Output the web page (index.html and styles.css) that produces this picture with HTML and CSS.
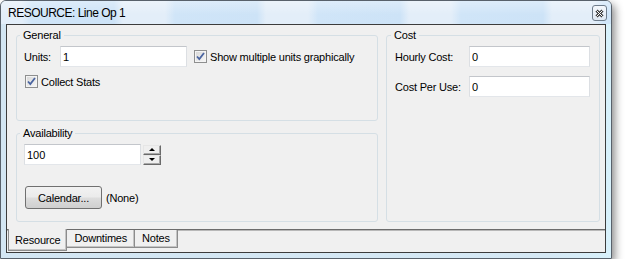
FILE: index.html
```html
<!doctype html>
<html lang="en">
<head>
    <meta charset="UTF-8">
    <title>RESOURCE: Line Op 1</title>
    <link rel="stylesheet" href="styles.css">
</head>
<body>
    <div class="window">
        <div class="titlebar">
            <span class="title">RESOURCE: Line Op 1</span>
            <button class="close">
                <svg width="9" height="9" viewBox="0 0 9 9">
                    <path d="M1.5 1.5 L7.5 7.5 M7.5 1.5 L1.5 7.5" stroke="#3b3b3b" stroke-width="3"/>
                    <path d="M1.5 1.5 L7.5 7.5 M7.5 1.5 L1.5 7.5" stroke="#ffffff" stroke-width="1"/>
                </svg>
            </button>
        </div>

        <div class="client">
            <div class="page">
                <fieldset class="group general">
                    <legend>General</legend>
                    <div class="row">
                        <label class="lbl units-lbl">Units:</label>
                        <input type="text" class="field units" value="1">
                        <label class="check show-check">
                            <span class="box"><svg width="11" height="11" viewBox="0 0 11 11"><path d="M2 5.5 L4.3 8 L9 2" fill="none" stroke="#4a64a0" stroke-width="1.8"/></svg></span>
                            Show multiple units graphically
                        </label>
                    </div>
                    <label class="check stats-check">
                        <span class="box"><svg width="11" height="11" viewBox="0 0 11 11"><path d="M2 5.5 L4.3 8 L9 2" fill="none" stroke="#4a64a0" stroke-width="1.8"/></svg></span>
                        Collect Stats
                    </label>
                </fieldset>

                <fieldset class="group cost">
                    <legend>Cost</legend>
                    <div class="row">
                        <label class="lbl cost-lbl">Hourly Cost:</label>
                        <input type="text" class="field cost-field" value="0">
                    </div>
                    <div class="row cost-row">
                        <label class="lbl cost-lbl">Cost Per Use:</label>
                        <input type="text" class="field cost-field" value="0">
                    </div>
                </fieldset>

                <fieldset class="group avail">
                    <legend>Availability</legend>
                    <div class="row">
                        <input type="text" class="field avail-field" value="100">
                        <div class="spin">
                            <span class="spin-btn"><i class="arrow-up"></i></span>
                            <span class="spin-btn"><i class="arrow-down"></i></span>
                        </div>
                    </div>
                    <div class="row cal-row">
                        <button class="btn">Calendar...</button>
                        <span class="none">(None)</span>
                    </div>
                </fieldset>
            </div>

            <div class="tabs">
                <span class="tab active">Resource</span>
                <span class="tab">Downtimes</span>
                <span class="tab">Notes</span>
            </div>
        </div>
    </div>
</body>
</html>
```

FILE: styles.css
```css
* {
    margin: 0;
    padding: 0;
    box-sizing: border-box;
}

body {
    background: #ffffff;
    font: 11px "Liberation Sans", Arial, sans-serif;
    letter-spacing: -0.2px;
    color: #000000;
}

/* window frame */
.window {
    display: flex;
    flex-direction: column;
    width: 612px;
    height: 259px;
    padding: 0 5px 5px 5px;
    border: 1px solid #58616b;
    border-radius: 6px 6px 0 0;
    background: linear-gradient(90deg, #d3e6f3 0, #d6e9f5 90%, #d8f1fb 100%);
    box-shadow: 3px 4px 8px rgba(0, 0, 0, 0.45);
}

.titlebar {
    display: flex;
    align-items: flex-start;
    height: 23px;
    margin: 0 -5px;
    padding: 0 4px 0 7px;
    border-radius: 5px 5px 0 0;
    background:
        linear-gradient(rgba(255, 255, 255, 0.3), rgba(255, 255, 255, 0) 60%),
        linear-gradient(90deg, #e3eef9 0, #e3eef9 42px, #d0e5f8 52px, #cde3f7 134px, #e3eef9 143px);
    background-size: 100% 100%, 143px 100%;
    background-position: 0 0, 122px 0;
    background-repeat: no-repeat, repeat-x;
}

.title {
    font-size: 12px;
    letter-spacing: -0.5px;
    line-height: 24px;
}

.close {
    display: flex;
    align-items: center;
    justify-content: center;
    width: 15px;
    height: 16px;
    margin: 4px 0 0 auto;
    border: 1px solid #6f7d8c;
    border-radius: 3px;
    background: linear-gradient(#f4f8fc, #dfe8f2);
}

/* client area */
.client {
    display: flex;
    flex-direction: column;
    flex: 1;
    border: 1px solid #3c3c3c;
    background: #f0f0f0;
}

.page {
    display: grid;
    grid-template-columns: 362px 214px;
    grid-template-rows: 92px 95px;
    column-gap: 8px;
    row-gap: 6px;
    height: 204px;
    padding: 4px 0 0 9px;
}

.group {
    min-width: 0;
    border: 1px solid #d5dfe5;
    border-radius: 3px;
    padding: 0 8px 0 7px;
}

.group legend {
    padding: 0 3px;
    margin-left: -4px;
    line-height: 13px;
}

.general {
    grid-column: 1;
    grid-row: 1;
}

.cost {
    grid-column: 2;
    grid-row: 1 / 3;
    padding-left: 8px;
}

.avail {
    grid-column: 1;
    grid-row: 2;
}

.row {
    display: flex;
    align-items: center;
    margin-top: 4px;
}

.lbl {
    flex: none;
}

.units-lbl {
    width: 36px;
}

.cost-lbl {
    width: 74px;
}

.cost-row {
    margin-top: 9px;
}

.field {
    height: 21px;
    padding: 0 2px;
    border: 1px solid;
    border-color: #c3c6cb #dcdfe3 #e3e6ea #dcdfe3;
    background: #ffffff;
    font: 11px "Liberation Sans", Arial, sans-serif;
    color: #000000;
    outline: none;
}

.units {
    width: 127px;
}

.cost-field {
    width: 121px;
}

.avail-field {
    width: 117px;
}

/* checkboxes */
.check {
    display: flex;
    align-items: center;
    height: 17px;
}

.box {
    display: flex;
    align-items: center;
    justify-content: center;
    width: 13px;
    height: 13px;
    margin-right: 3px;
    border: 1px solid #8e8f8f;
    background: linear-gradient(135deg, #d6d6d6, #f8f8f8);
    box-shadow: inset 0 0 0 1px #f4f4f4;
}

.show-check {
    margin-left: 7px;
}

.stats-check {
    margin: 6px 0 0 1px;
}

/* spinner */
.spin {
    display: flex;
    flex-direction: column;
    margin-left: 2px;
}

.spin-btn {
    display: flex;
    align-items: center;
    justify-content: center;
    width: 18px;
    height: 10px;
    border: 1px solid;
    border-color: #e6e6e6 #6a6a6a #6a6a6a #e6e6e6;
    background: #efefef;
    box-shadow: inset -1px -1px 0 #a9a9a9;
}

.arrow-up,
.arrow-down {
    width: 0;
    height: 0;
    border-left: 3px solid transparent;
    border-right: 3px solid transparent;
}

.arrow-up {
    border-bottom: 3px solid #000000;
}

.arrow-down {
    border-top: 3px solid #000000;
}

.cal-row {
    margin-top: 21px;
    padding-left: 1px;
}

.btn {
    width: 77px;
    height: 23px;
    border: 1px solid #707070;
    border-radius: 3px;
    background: linear-gradient(#f2f2f2 0, #ebebeb 48%, #dddddd 52%, #cfcfcf 100%);
    font: 11px "Liberation Sans", Arial, sans-serif;
    letter-spacing: -0.2px;
    color: #000000;
}

.none {
    margin-left: 4px;
}

/* tabs */
.tabs {
    display: flex;
    align-items: flex-start;
    flex: 1;
    padding-left: 1px;
    border-top: 1px solid #6c6c6c;
    box-shadow: inset 0 1px 0 #b8b8b8;
}

.tab {
    height: 18px;
    padding: 0 7px;
    border: 1px solid #8c8c8c;
    border-top: none;
    line-height: 17px;
    background: #f0f0f0;
    box-shadow: inset -1px -1px 0 #c4c4c4;
}

.tab + .tab {
    margin-left: -1px;
}

.tab.active {
    height: 22px;
    margin-top: -1px;
    padding: 1px 6px 0 6px;
    line-height: 21px;
    position: relative;
    z-index: 1;
}
```
